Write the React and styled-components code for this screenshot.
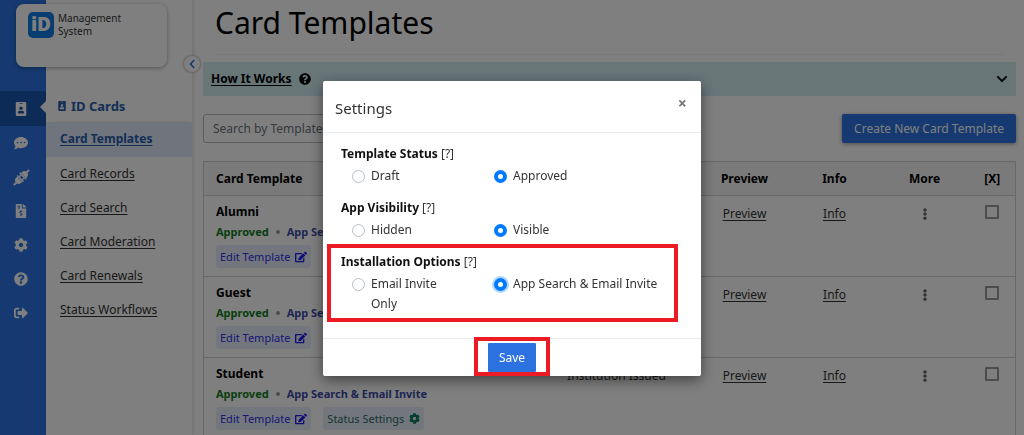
import React, { useState } from 'react';
import styled, { createGlobalStyle, css } from 'styled-components';
import {
    FaIdBadge, FaCommentDots, FaFileInvoiceDollar, FaCog, FaQuestionCircle,
    FaSignOutAlt, FaChevronLeft, FaChevronDown, FaEdit, FaEllipsisV,
} from 'react-icons/fa';

const PlugsIcon = ({ size }) => (
    <svg width={size} height={size} viewBox="0 0 18 18" fill="currentColor" aria-hidden="true">
        <g transform="rotate(-45 9 9)">
            <rect x="-2.5" y="8" width="4" height="2" />
            <path d="M1 9a3.8 3.8 0 0 1 3.8-3.8h1.4v7.6H4.8A3.8 3.8 0 0 1 1 9z" />
            <rect x="6.4" y="4.2" width="1.6" height="9.6" rx=".5" />
            <rect x="8" y="6" width="2.2" height="1.5" />
            <rect x="8" y="10.5" width="2.2" height="1.5" />
            <rect x="10.4" y="4.2" width="1.6" height="9.6" rx=".5" />
            <path d="M12.2 5.2h1A3.8 3.8 0 0 1 17 9a3.8 3.8 0 0 1-3.8 3.8h-1z" />
            <rect x="16.5" y="8" width="4" height="2" />
        </g>
    </svg>
);

const railItems = [
    { label: 'ID Cards', icon: FaIdBadge, active: true },
    { label: 'Messages', icon: FaCommentDots },
    { label: 'Integrations', icon: PlugsIcon, size: 17 },
    { label: 'Billing', icon: FaFileInvoiceDollar },
    { label: 'Settings', icon: FaCog },
    { label: 'Help', icon: FaQuestionCircle },
    { label: 'Sign Out', icon: FaSignOutAlt },
];

const menuItems = ['Card Templates', 'Card Records', 'Card Search', 'Card Moderation', 'Card Renewals', 'Status Workflows'];

const templates = ['Alumni', 'Guest', 'Student'];

const settings = [
    { name: 'status', title: 'Template Status', options: ['Draft', 'Approved'] },
    { name: 'visibility', title: 'App Visibility', options: ['Hidden', 'Visible'] },
    { name: 'install', title: 'Installation Options', options: ['Email Invite Only', 'App Search & Email Invite'], marked: true },
];

const App = () => {
    return (
        <>
            <GlobalStyle />
            <Page>
                <Rail>
                    {railItems.map(({ label, icon: Icon, size, active }) => (
                        <RailLink href="#" key={label} aria-label={label} $active={active}>
                            <Icon size={size || 14} />
                        </RailLink>
                    ))}
                </Rail>
                <SideMenu>
                    <MenuTitle><FaIdBadge size={10} />ID Cards</MenuTitle>
                    {menuItems.map((item, i) => (
                        <MenuRow key={item} $active={i === 0}>
                            <a href="#">{item}</a>
                        </MenuRow>
                    ))}
                    <Collapse aria-label="Collapse menu"><FaChevronLeft size={10} /></Collapse>
                </SideMenu>
                <Main>
                    <Title>Card Templates</Title>
                    <HowBar>
                        <a href="#">How It Works</a>
                        <FaQuestionCircle size={12} />
                        <FaChevronDown size={12} />
                    </HowBar>
                    <Toolbar>
                        <Search type="text" placeholder="Search by Template" aria-label="Search by Template" />
                        <Create>Create New Card Template</Create>
                    </Toolbar>
                    <TemplateTable />
                </Main>
                <Brand>
                    <Logo>iD</Logo>
                    <span>Management<br />System</span>
                </Brand>
            </Page>
            <SettingsModal />
        </>
    );
};

const TemplateTable = () => (
    <Table>
        <thead>
            <tr>
                <Th $left>Card Template</Th>
                <Th $width={166} aria-label="Type" />
                <Th $width={90}>Preview</Th>
                <Th $width={90}>Info</Th>
                <Th $width={90}>More</Th>
                <Th $width={46}>[X]</Th>
            </tr>
        </thead>
        <tbody>
            {templates.map((name) => (
                <tr key={name}>
                    <Td $left>
                        <Name>{name}</Name>
                        <Meta>
                            <Approved>Approved</Approved>
                            <Dot />
                            <Scope>App Search &amp; Email Invite</Scope>
                        </Meta>
                        <Chips>
                            <Chip>Edit Template <FaEdit size={12} /></Chip>
                            <Chip $green>Status Settings <FaCog size={11} /></Chip>
                        </Chips>
                    </Td>
                    <Td>Institution Issued</Td>
                    <Td><a href="#">Preview</a></Td>
                    <Td><a href="#">Info</a></Td>
                    <Td><More aria-label={'More for ' + name}><FaEllipsisV size={12} /></More></Td>
                    <Td><Check type="checkbox" aria-label={'Select ' + name} /></Td>
                </tr>
            ))}
        </tbody>
    </Table>
);

const SettingsModal = () => {
    const [values, setValues] = useState({ status: 1, visibility: 1, install: 1 });
    return (
        <Backdrop>
            <Dialog role="dialog" aria-labelledby="settings-title">
                <DialogHead>
                    <h2 id="settings-title">Settings</h2>
                    <Close aria-label="Close">×</Close>
                </DialogHead>
                <DialogBody>
                    {settings.map((group) => (
                        <Group key={group.name} $marked={group.marked}>
                            <legend><b>{group.title}</b> [?]</legend>
                            <Options>
                                {group.options.map((option, i) => (
                                    <Option key={option}>
                                        <Radio
                                            type="radio"
                                            name={group.name}
                                            checked={values[group.name] === i}
                                            onChange={() => setValues({ ...values, [group.name]: i })}
                                            $ring={group.marked}
                                        />
                                        <span>{option}</span>
                                    </Option>
                                ))}
                            </Options>
                        </Group>
                    ))}
                </DialogBody>
                <DialogFoot>
                    <SaveMark><Save>Save</Save></SaveMark>
                </DialogFoot>
            </Dialog>
        </Backdrop>
    );
};

const GlobalStyle = createGlobalStyle`
    *{
        box-sizing:border-box;
    }
    body{
        margin:0;
        overflow:hidden;
        background:#fff;
        color:#333;
        font-family:"Noto Sans", sans-serif;
        font-size:12px;
        line-height:20px;
    }
    a{
        color:inherit;
        text-underline-offset:2px;
    }
    button, input{
        font:inherit;
    }
    button{
        border:0;
        padding:0;
        background:none;
        color:inherit;
    }
`

const Page = styled.div`
    position:relative;
    display:flex;
    height:100vh;
    overflow:hidden;
`

const Rail = styled.nav`
    display:flex;
    flex-direction:column;
    flex:none;
    width:46px;
    padding-top:91px;
    background:#2b72e0;
`

const RailLink = styled.a`
    position:relative;
    display:flex;
    align-items:center;
    justify-content:center;
    flex:none;
    height:34px;
    padding-right:4px;
    color:#fff;
    ${({ $active }) => $active && css`
        height:35px;
        background:#1956ae;
        &::after{
            content:'';
            position:absolute;
            right:0;
            top:10px;
            border:solid transparent;
            border-width:6px 6px 6px 0;
            border-right-color:#fff;
        }
    `}
`

const SideMenu = styled.aside`
    position:relative;
    flex:none;
    width:147px;
    padding-top:90px;
    border-right:1px solid #ececec;
    box-shadow:1px 0 3px rgba(0,0,0,.1);
`

const MenuTitle = styled.h3`
    display:flex;
    align-items:center;
    gap:4px;
    height:32px;
    margin:0 6px 0 11px;
    border-bottom:1px solid #eee;
    color:#2a5cab;
    font-size:13px;
    font-weight:700;
`

const MenuRow = styled.div`
    padding:7px 14px;
    ${({ $active }) => $active && css`
        padding-bottom:8px;
        background:#e0ebfa;
        color:#2a5cab;
        font-weight:700;
    `}
`

const Collapse = styled.button`
    position:absolute;
    top:56px;
    right:-8px;
    display:flex;
    align-items:center;
    justify-content:center;
    width:16px;
    height:16px;
    border-radius:50%;
    background:#fff;
    color:#2b72e0;
    box-shadow:0 0 3px rgba(0,0,0,.5);
`

const Brand = styled.div`
    position:absolute;
    left:16px;
    top:4px;
    display:flex;
    gap:4px;
    width:151px;
    height:63px;
    padding:8px 12px;
    border-radius:8px;
    background:#fff;
    box-shadow:0 1px 4px rgba(0,0,0,.35);
    font-size:10px;
    line-height:13px;
`

const Logo = styled.div`
    width:26px;
    height:26px;
    border-radius:5px;
    background:#0f7be0;
    color:#fff;
    font-family:"Open Sans", sans-serif;
    font-size:19px;
    font-weight:800;
    line-height:25px;
    text-align:center;
`

const Main = styled.main`
    flex:1;
    padding:0 8px 0 10px;
`

const Title = styled.h1`
    height:55px;
    margin:0 12px;
    padding-top:3px;
    border-bottom:1px solid #f0f0f0;
    color:#000;
    font-size:30px;
    font-weight:400;
    line-height:40px;
`

const HowBar = styled.div`
    display:flex;
    align-items:center;
    gap:7px;
    height:34px;
    margin-top:7px;
    padding:0 8px;
    background:#d1ecf1;
    color:#000;
    font-weight:700;
    svg:last-child{
        margin-left:auto;
    }
`

const Toolbar = styled.div`
    display:flex;
    justify-content:space-between;
    height:29px;
    margin:18px 0;
`

const Search = styled.input`
    width:240px;
    padding:0 9px;
    border:1px solid #bbb;
    border-radius:3px;
    background:#fff;
    &::placeholder{
        color:#6c757d;
    }
`

const Create = styled.button`
    padding:0 12px;
    border-radius:2px;
    background:#2b72e0;
    color:#fff;
    box-shadow:0 1px 4px rgba(0,0,0,.4);
`

const Table = styled.table`
    width:100%;
    border:1px solid #d0d0d0;
    border-collapse:collapse;
    table-layout:fixed;
`

const Th = styled.th`
    width:${({ $width }) => ($width ? $width + 'px' : 'auto')};
    height:34px;
    padding:0 ${({ $left }) => ($left ? 12 : 0)}px;
    background:#f4f4f4;
    color:#000;
    text-align:${({ $left }) => ($left ? 'left' : 'center')};
`

const Td = styled.td`
    height:81px;
    padding:${({ $left }) => ($left ? '6px 0 6px 12px' : '8px 0 0')};
    border-top:1px solid #d0d0d0;
    text-align:${({ $left }) => ($left ? 'left' : 'center')};
    vertical-align:top;
`

const Name = styled.div`
    color:#000;
    font-weight:700;
`

const Meta = styled.div`
    display:flex;
    align-items:center;
    gap:7px;
    font-size:11px;
    font-weight:700;
`

const Approved = styled.span`
    color:#0f7d1c;
`

const Dot = styled.i`
    width:4px;
    height:4px;
    border-radius:50%;
    background:#999;
`

const Scope = styled.span`
    color:#3c4ba8;
`

const Chips = styled.div`
    display:flex;
    gap:12px;
    margin-top:3px;
`

const Chip = styled.button`
    display:flex;
    align-items:center;
    gap:5px;
    height:23px;
    padding:0 4px;
    border-radius:3px;
    background:#e6eefa;
    color:${({ $green }) => ($green ? '#2b6b66' : '#2f2fea')};
    font-size:11px;
    svg{
        color:${({ $green }) => ($green ? '#0b7a5c' : '#1c1ce8')};
    }
`

const More = styled.button`
    display:inline-flex;
    align-items:center;
    height:20px;
    color:#666;
`

const Check = styled.input`
    appearance:none;
    width:14px;
    height:14px;
    margin:1px 0 0;
    border:2px solid #999;
    border-radius:1px;
`

const Backdrop = styled.div`
    position:fixed;
    inset:0;
    display:flex;
    align-items:center;
    justify-content:center;
    padding-top:22px;
    background:rgba(0,0,0,.5);
`

const Dialog = styled.section`
    width:378px;
    border-radius:2px;
    background:#fff;
    box-shadow:0 4px 14px rgba(0,0,0,.5);
`

const DialogHead = styled.header`
    display:flex;
    justify-content:space-between;
    padding:12px;
    border-bottom:1px solid #e9ecef;
    h2{
        margin:0;
        padding-top:3px;
        font-size:15px;
        font-weight:400;
        line-height:24px;
    }
`

const Close = styled.button`
    height:20px;
    padding:0 2px;
    color:#777;
    font-size:16px;
    font-weight:700;
`

const DialogBody = styled.div`
    padding:10px 18px 23px;
`

/* the floated legend keeps the title inside the fieldset's own box */
const Group = styled.fieldset`
    position:relative;
    min-width:0;
    margin:0 0 10px;
    padding:0;
    border:0;
    &:last-child{
        margin:0;
    }
    legend{
        float:left;
        width:100%;
        padding:0;
        line-height:22px;
    }
    b{
        color:#111;
    }
    ${({ $marked }) => $marked && css`
        &::after{
            content:'';
            position:absolute;
            inset:-7px 5px -7px -14px;
            border:4px solid #ed1c24;
            pointer-events:none;
        }
    `}
`

const Options = styled.div`
    display:grid;
    clear:both;
    grid-template-columns:142px 1fr;
    padding-left:11px;
`

const Option = styled.label`
    display:flex;
    gap:6px;
    padding:1px 0;
    &:first-child{
        padding-right:36px;
    }
`

const Radio = styled.input`
    appearance:none;
    flex:none;
    width:13px;
    height:13px;
    margin:4px 0 0;
    border:1px solid #b8bfc8;
    border-radius:50%;
    background:#fff;
    &:checked{
        border:4px solid #007bff;
        box-shadow:${({ $ring }) => ($ring ? '0 0 0 2px #b3d7ff' : 'none')};
    }
`

const DialogFoot = styled.footer`
    display:flex;
    justify-content:center;
    height:38px;
    border-top:1px solid #e9ecef;
`

const SaveMark = styled.div`
    height:39px;
    margin-top:-2px;
    padding:2px 10px 0;
    border:4px solid #ed1c24;
`

const Save = styled.button`
    height:29px;
    padding:0 11px;
    border-radius:1px;
    background:#2b72e0;
    color:#fff;
`

export default App
